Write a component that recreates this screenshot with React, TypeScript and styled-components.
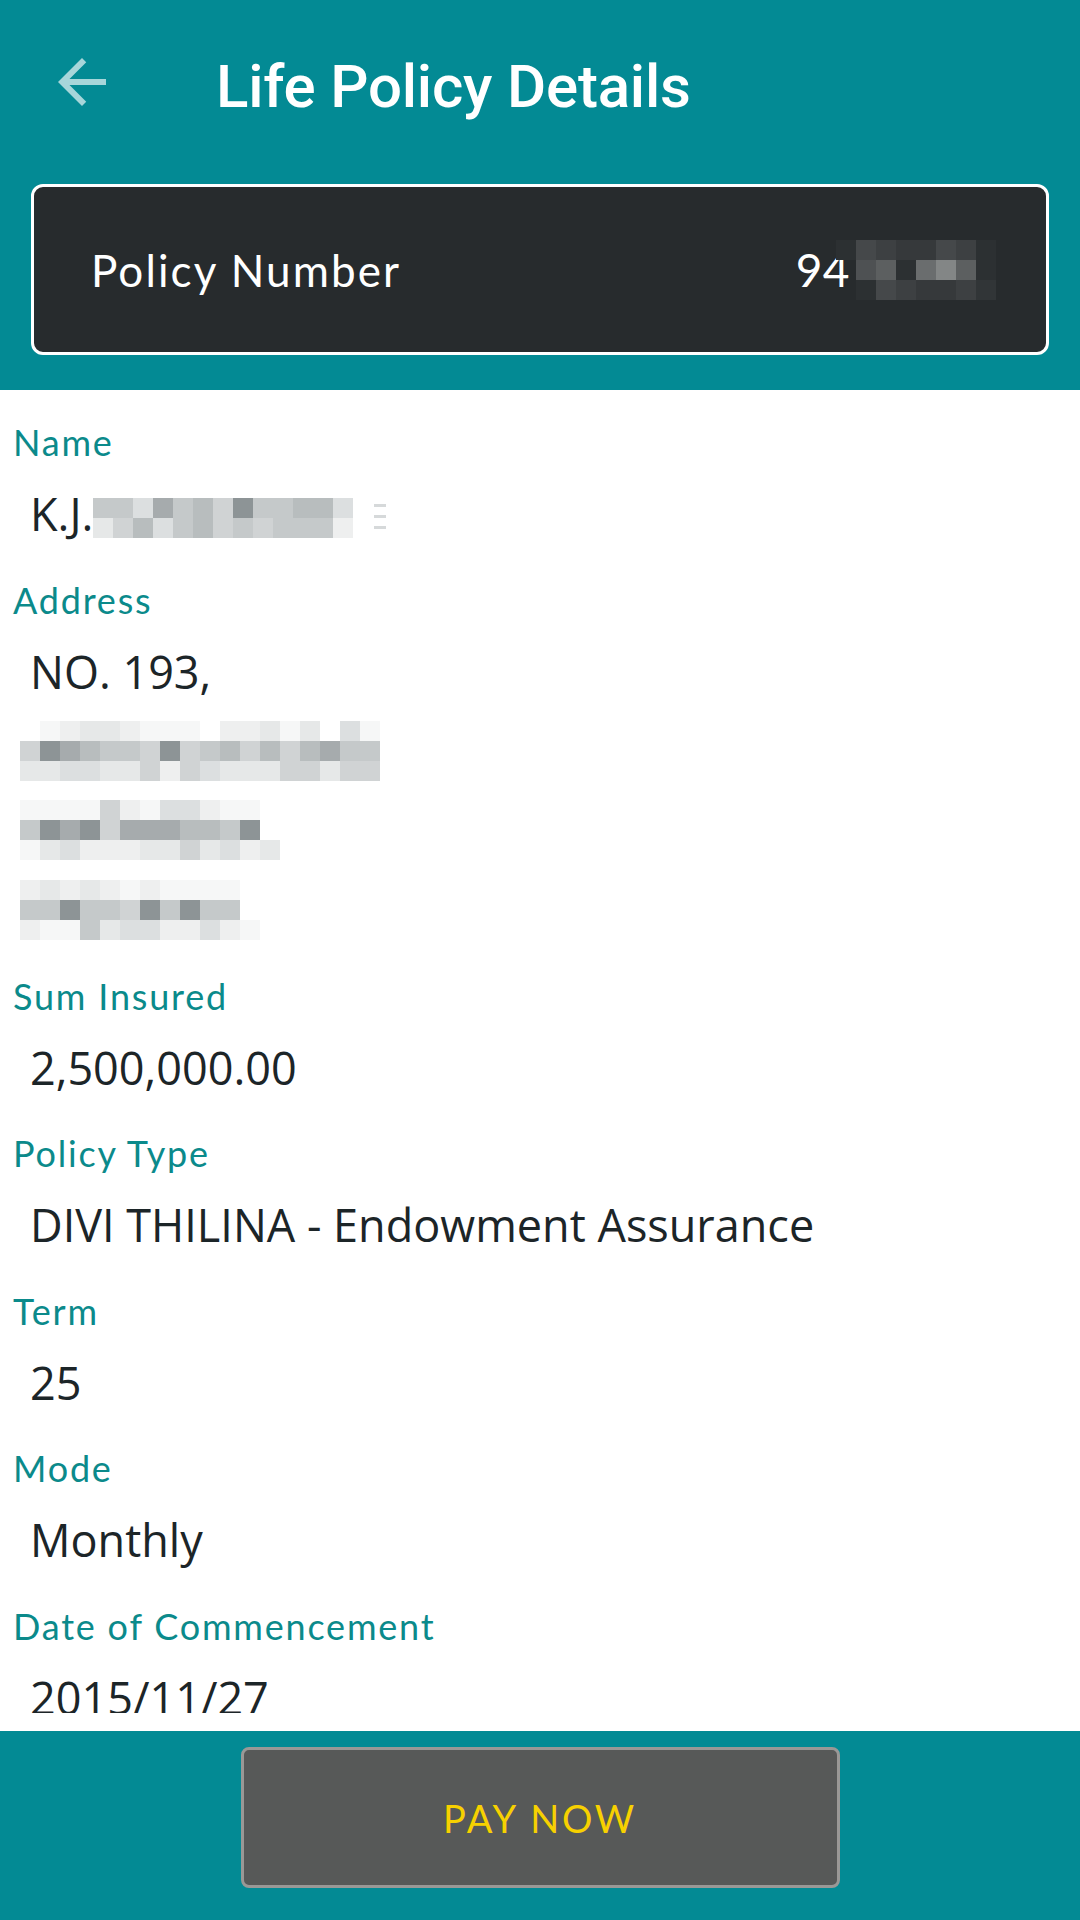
import React from "react";
import styled, { createGlobalStyle } from "styled-components";

const GlobalStyle = createGlobalStyle`
  html, body { margin: 0; padding: 0; background: #ffffff; }
  body { width: 1080px; height: 1920px; overflow: hidden; }
  * { box-sizing: border-box; }
`;

const TEAL = "#038a94";

const Screen = styled.div`
  width: 1080px;
  height: 1920px;
  display: flex;
  flex-direction: column;
  background: #ffffff;
`;

const Header = styled.header`
  background: ${TEAL};
  padding: 0 31px 35px;
  display: flex;
  flex-direction: column;
`;

const TopBar = styled.div`
  height: 172px;
  display: flex;
  align-items: center;
  margin: 0 -31px 12px;
  padding-left: 46px;
  gap: 98px;
`;

const BackButton = styled.button`
  width: 72px;
  height: 72px;
  padding: 0;
  margin-bottom: 8px;
  border: none;
  background: transparent;
  display: flex;
  align-items: center;
  justify-content: center;
  color: rgba(255, 255, 255, 0.65);
`;

const Title = styled.h1`
  margin: 0;
  font-family: Roboto, "Liberation Sans", sans-serif;
  font-weight: 500;
  font-size: 60px;
  color: #ffffff;
  letter-spacing: -0.2px;
`;

const PolicyCard = styled.div`
  height: 171px;
  border: 3px solid #ffffff;
  border-radius: 12px;
  background: #272b2d;
  display: flex;
  align-items: center;
  justify-content: space-between;
  padding: 0 50px 0 57px;
`;

const CardLabel = styled.span`
  font-family: Lato, "Noto Sans", sans-serif;
  font-size: 44px;
  color: #ffffff;
  letter-spacing: 2.1px;
`;

const CardValue = styled.span`
  display: flex;
  align-items: center;
  font-family: Lato, "Noto Sans", sans-serif;
  font-size: 46px;
  color: #ffffff;
`;

const Digits = styled.span`
  letter-spacing: 0.5px;
`;

const Scroll = styled.main`
  flex: 1;
  overflow: hidden;
  background: #ffffff;
  padding: 28px 13px 0;
  display: flex;
  flex-direction: column;
`;

const Field = styled.section`
  display: flex;
  flex-direction: column;
  flex-shrink: 0;
  margin-bottom: 22px;
`;

const Label = styled.div`
  font-family: Lato, "Noto Sans", sans-serif;
  font-size: 36px;
  line-height: 48px;
  height: 48px;
  color: #0b8a8b;
  letter-spacing: 1.8px;
  margin-bottom: 8px;
`;

const Value = styled.div`
  font-family: "Open Sans", "Noto Sans", sans-serif;
  font-size: 45px;
  line-height: 79.5px;
  height: 79.5px;
  color: #1c2528;
  padding-left: 17px;
  display: flex;
  align-items: center;
  white-space: nowrap;
  flex-shrink: 0;
`;

const MosaicBlock = styled.div<{ $shiftX?: number; $shiftY?: number }>`
  display: flex;
  flex-direction: column;
  margin-left: ${(p) => p.$shiftX ?? 0}px;
  margin-top: ${(p) => p.$shiftY ?? 0}px;
`;

const MosaicRow = styled.div`
  display: flex;
`;

const Cell = styled.span<{ $color: string }>`
  width: 20px;
  height: 20px;
  background: ${(p) => p.$color};
`;

const Dashes = styled.span`
  width: 12px;
  height: 30px;
  margin-left: 21px;
  margin-top: 10px;
  background: repeating-linear-gradient(
    to bottom,
    #d6d9da 0 3px,
    transparent 3px 11px
  );
`;

const BottomGap = styled.div`
  height: 18px;
  background: #ffffff;
`;

const Footer = styled.footer`
  height: 189px;
  background: ${TEAL};
  display: flex;
  justify-content: center;
  align-items: flex-start;
  padding-top: 16px;
`;

const PayButton = styled.button`
  width: 599px;
  height: 141px;
  background: #575958;
  border: 3px solid #9a9896;
  border-radius: 8px;
  font-family: Lato, "Noto Sans", sans-serif;
  font-size: 38px;
  color: #f7d100;
  letter-spacing: 2.8px;
  padding-left: 6px;
`;

const LIGHT = [
  "#ffffff",
  "#f6f7f7",
  "#eeefef",
  "#e6e8e8",
  "#dcdfe0",
  "#d0d3d4",
  "#c5c9ca",
  "#b8bdbe",
  "#a6abad",
  "#8d9496",
];

const DARK = [
  "transparent",
  "#2c3032",
  "#313537",
  "#36393b",
  "#3d4042",
  "#45484a",
  "#4e5153",
  "#5c5f60",
  "#6a6d6e",
  "#838686",
];

type MosaicProps = {
  rows: string[];
  palette: string[];
  shiftX?: number;
  shiftY?: number;
};

const Mosaic = ({ rows, palette, shiftX, shiftY }: MosaicProps) => (
  <MosaicBlock $shiftX={shiftX} $shiftY={shiftY}>
    {rows.map((r, i) => (
      <MosaicRow key={i}>
        {r.split("").map((c, j) => (
          <Cell key={j} $color={palette[Number(c)]} />
        ))}
      </MosaicRow>
    ))}
  </MosaicBlock>
);

const BackIcon = () => (
  <svg width="72" height="72" viewBox="0 0 24 24">
    <path
      d="M20 11H7.83l5.59-5.59L12 4l-8 8 8 8 1.41-1.41L7.83 13H20v-2z"
      fill="currentColor"
    />
  </svg>
);

const fields: { label: string; value: string }[] = [
  { label: "Sum Insured", value: "2,500,000.00" },
  { label: "Policy Type", value: "DIVI THILINA - Endowment Assurance" },
  { label: "Term", value: "25" },
  { label: "Mode", value: "Monthly" },
  { label: "Date of Commencement", value: "2015/11/27" },
];

export default function App() {
  return (
    <Screen>
      <GlobalStyle />
      <Header>
        <TopBar>
          <BackButton aria-label="Back">
            <BackIcon />
          </BackButton>
          <Title>Life Policy Details</Title>
        </TopBar>
        <PolicyCard>
          <CardLabel>Policy Number</CardLabel>
          <CardValue>
            <Digits>94</Digits>
            <Mosaic
              palette={DARK}
              rows={["15433541", "06718971", "01543342"]}
              shiftX={-14}
            />
          </CardValue>
        </PolicyCard>
      </Header>

      <Scroll>
        <Field>
          <Label>Name</Label>
          <Value>
            K.J.
            <Mosaic
              palette={LIGHT}
              rows={["6648675966774", "3574675656662"]}
              shiftY={8}
            />
            <Dashes />
          </Value>
        </Field>
        <Field>
          <Label>Address</Label>
          <Value>NO. 193,</Value>
          <Value>
            <Mosaic
              palette={LIGHT}
              rows={["012332111022313041", "598766595675757866", "334433525433355355"]}
              shiftX={-10}
            />
          </Value>
          <Value>
            <Mosaic
              palette={LIGHT}
              rows={["111152144211", "698958887769", "1342223353423"]}
              shiftX={-10}
            />
          </Value>
          <Value>
            <Mosaic
              palette={LIGHT}
              rows={["23232121111", "66966596966", "211634422421"]}
              shiftX={-10}
            />
          </Value>
        </Field>
        {fields.map((f) => (
          <Field key={f.label}>
            <Label>{f.label}</Label>
            <Value>{f.value}</Value>
          </Field>
        ))}
      </Scroll>

      <BottomGap />
      <Footer>
        <PayButton>PAY NOW</PayButton>
      </Footer>
    </Screen>
  );
}
